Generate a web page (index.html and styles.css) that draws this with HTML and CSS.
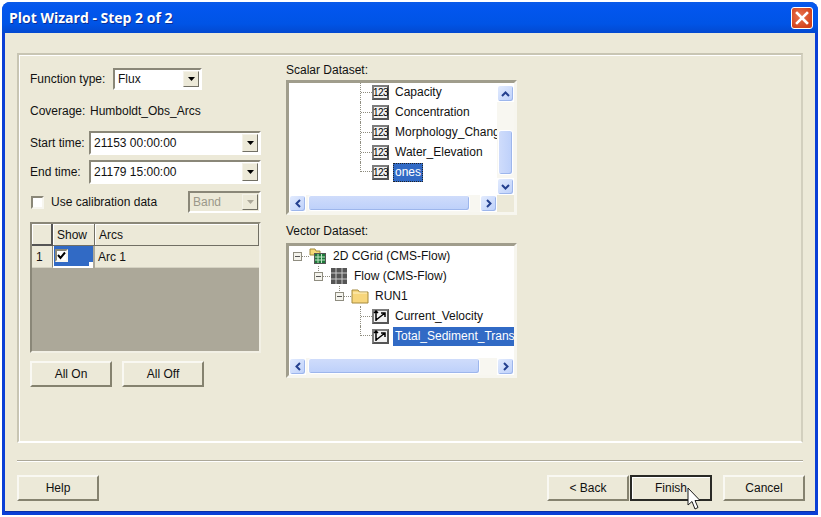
FILE: index.html
```html
<!DOCTYPE html>
<html lang="en">
<head>
  <meta charset="UTF-8">
  <title>Plot Wizard - Step 2 of 2</title>
  <link rel="stylesheet" href="styles.css">
</head>
<body>

  <div class="ventana">
    <!-- Title bar -->
    <div class="titulo">
      <span class="titulo-texto">Plot Wizard - Step 2 of 2</span>
      <span class="cerrar">
        <svg width="14" height="14" viewBox="0 0 14 14"><path d="M2 2 L12 12 M12 2 L2 12" stroke="#fff" stroke-width="2.6" stroke-linecap="square"/></svg>
      </span>
    </div>

    <div class="cliente">
      <div class="grupo">

        <!-- Left column -->
        <div class="col-izq">
          <div class="fila fila-funcion">
            <span class="lbl-funcion">Function type:</span>
            <div class="combo combo-funcion">
              <span class="combo-valor">Flux</span>
              <span class="flecha"><svg width="9" height="6" viewBox="0 0 9 6"><path d="M1 1 H8 L4.5 5 Z" fill="#000"/></svg></span>
            </div>
          </div>

          <div class="fila fila-cobertura">
            <span class="lbl-cobertura">Coverage:</span>
            <span>Humboldt_Obs_Arcs</span>
          </div>

          <div class="fila fila-inicio">
            <span class="lbl-tiempo">Start time:</span>
            <div class="combo combo-tiempo">
              <span class="combo-valor">21153 00:00:00</span>
              <span class="flecha"><svg width="9" height="6" viewBox="0 0 9 6"><path d="M1 1 H8 L4.5 5 Z" fill="#000"/></svg></span>
            </div>
          </div>

          <div class="fila fila-fin">
            <span class="lbl-tiempo">End time:</span>
            <div class="combo combo-tiempo">
              <span class="combo-valor">21179 15:00:00</span>
              <span class="flecha"><svg width="9" height="6" viewBox="0 0 9 6"><path d="M1 1 H8 L4.5 5 Z" fill="#000"/></svg></span>
            </div>
          </div>

          <div class="fila fila-calibracion">
            <span class="check"></span>
            <span class="lbl-calibracion">Use calibration data</span>
            <div class="combo combo-banda">
              <span class="combo-valor">Band</span>
              <span class="flecha"><svg width="9" height="6" viewBox="0 0 9 6"><path d="M1 1 H8 L4.5 5 Z" fill="#aca899"/></svg></span>
            </div>
          </div>

          <!-- Arcs table -->
          <div class="tabla">
            <div class="celda-cab celda-esquina"></div>
            <div class="celda-cab">Show</div>
            <div class="celda-cab">Arcs</div>
            <div class="celda-num">1</div>
            <div class="celda-show">
              <span class="check check-on">
                <svg width="9" height="9" viewBox="0 0 9 9"><path d="M1 4 L3.5 7 L8 1.5" fill="none" stroke="#000" stroke-width="2"/></svg>
              </span>
            </div>
            <div class="celda-arco">Arc 1</div>
          </div>

          <div class="fila-botones">
            <button class="boton">All On</button>
            <button class="boton">All Off</button>
          </div>
        </div>

        <!-- Right column -->
        <div class="col-der">
          <div class="lbl-arbol">Scalar Dataset:</div>
          <div class="arbol">
            <div class="arbol-medio">
              <div class="vista">
                <div class="lista lista-escalar">
                  <div class="nodo nodo-hoja"><span class="rama"></span><span class="ico-num">123</span><span class="nombre">Capacity</span></div>
                  <div class="nodo nodo-hoja"><span class="rama"></span><span class="ico-num">123</span><span class="nombre">Concentration</span></div>
                  <div class="nodo nodo-hoja"><span class="rama"></span><span class="ico-num">123</span><span class="nombre">Morphology_Change</span></div>
                  <div class="nodo nodo-hoja"><span class="rama"></span><span class="ico-num">123</span><span class="nombre">Water_Elevation</span></div>
                  <div class="nodo nodo-hoja nodo-ultimo"><span class="rama"></span><span class="ico-num">123</span><span class="nombre sel sel-foco">ones</span></div>
                </div>
              </div>
              <div class="barra-v">
                <span class="sb-btn"><svg width="9" height="6" viewBox="0 0 9 6"><path d="M1 5 L4.5 1.5 L8 5" fill="none" stroke="#24408f" stroke-width="2"/></svg></span>
                <div class="sb-pista-v">
                  <span class="sb-pulgar-v"></span>
                </div>
                <span class="sb-btn"><svg width="9" height="6" viewBox="0 0 9 6"><path d="M1 1 L4.5 4.5 L8 1" fill="none" stroke="#24408f" stroke-width="2"/></svg></span>
              </div>
            </div>
            <div class="arbol-pie">
              <div class="barra-h barra-h-corta">
                <span class="sb-btn"><svg width="6" height="9" viewBox="0 0 6 9"><path d="M5 1 L1.5 4.5 L5 8" fill="none" stroke="#24408f" stroke-width="2"/></svg></span>
                <div class="sb-pista-h"><span class="sb-pulgar-h pulgar-escalar"></span></div>
                <span class="sb-btn"><svg width="6" height="9" viewBox="0 0 6 9"><path d="M1 1 L4.5 4.5 L1 8" fill="none" stroke="#24408f" stroke-width="2"/></svg></span>
              </div>
              <span class="esquina"></span>
            </div>
          </div>

          <div class="lbl-arbol lbl-vector">Vector Dataset:</div>
          <div class="arbol">
            <div class="arbol-medio">
              <div class="vista">
                <div class="lista">
                  <div class="nodo nivel-0">
                    <span class="expansor"></span><span class="guion"></span>
                    <svg class="ico" width="18" height="18" viewBox="0 0 18 18">
                      <path d="M1 5 V2 H6 L7 4 H11 V8 H1 Z" fill="#f6d977" stroke="#a08a3c"/>
                      <rect x="5.5" y="6.5" width="11" height="10" fill="#1d7a3a" stroke="#555"/>
                      <path d="M9 7 V16 M12.5 7 V16 M6 10 H16 M6 13 H16" stroke="#bfe6c4"/>
                    </svg>
                    <span class="nombre">2D CGrid (CMS-Flow)</span>
                  </div>
                  <div class="nodo nivel-1">
                    <span class="expansor expansor-sub"></span><span class="guion"></span>
                    <svg class="ico" width="18" height="18" viewBox="0 0 18 18">
                      <rect x="1" y="1" width="16" height="16" fill="#555"/>
                      <path d="M6 1 V17 M12 1 V17 M1 6 H17 M1 12 H17" stroke="#c9c9c9"/>
                    </svg>
                    <span class="nombre">Flow (CMS-Flow)</span>
                  </div>
                  <div class="nodo nivel-2">
                    <span class="expansor expansor-sub"></span><span class="guion"></span>
                    <svg class="ico" width="18" height="18" viewBox="0 0 18 18">
                      <path d="M1 16 V3 H7 L8.5 5 H17 V16 Z" fill="#f7d67c" stroke="#a58a3e"/>
                      <path d="M2 6 H16" stroke="#fff2c4"/>
                    </svg>
                    <span class="nombre">RUN1</span>
                  </div>
                  <div class="nodo nodo-hoja">
                    <span class="rama"></span>
                    <span class="ico-vec"><svg width="15" height="13" viewBox="0 0 15 13"><path d="M3 1 V11 M1 3 L3 1 L5 3 M3 10 L12 3 M8 3 H12 V7" fill="none" stroke="#000" stroke-width="1.5"/></svg></span>
                    <span class="nombre">Current_Velocity</span>
                  </div>
                  <div class="nodo nodo-hoja nodo-ultimo">
                    <span class="rama"></span>
                    <span class="ico-vec"><svg width="15" height="13" viewBox="0 0 15 13"><path d="M3 1 V11 M1 3 L3 1 L5 3 M3 10 L12 3 M8 3 H12 V7" fill="none" stroke="#000" stroke-width="1.5"/></svg></span>
                    <span class="nombre sel">Total_Sediment_Transport</span>
                  </div>
                </div>
              </div>
            </div>
            <div class="arbol-pie">
              <div class="barra-h">
                <span class="sb-btn"><svg width="6" height="9" viewBox="0 0 6 9"><path d="M5 1 L1.5 4.5 L5 8" fill="none" stroke="#24408f" stroke-width="2"/></svg></span>
                <div class="sb-pista-h"><span class="sb-pulgar-h pulgar-vector"></span></div>
                <span class="sb-btn"><svg width="6" height="9" viewBox="0 0 6 9"><path d="M1 1 L4.5 4.5 L1 8" fill="none" stroke="#24408f" stroke-width="2"/></svg></span>
              </div>
            </div>
          </div>
        </div>

      </div>

      <div class="separador"></div>

      <!-- Bottom buttons -->
      <div class="pie">
        <button class="boton">Help</button>
        <div class="pie-der">
          <button class="boton">&lt; Back</button>
          <button class="boton boton-defecto">Finish
            <svg class="puntero" width="15" height="25" viewBox="0 0 15 25"><path d="M1 1 V18 L5 14.5 L8 22 L11 20.5 L8 13.5 H13 Z" fill="#fff" stroke="#1a1a1a"/></svg>
          </button>
          <button class="boton boton-cancelar">Cancel</button>
        </div>
      </div>
    </div>
  </div>

</body>
</html>
```

FILE: styles.css
```css
body {
  margin: 0;
  background-color: #fff;
  font-family: "Liberation Sans", Arial, sans-serif;
  font-size: 12px;
  color: #111;
}

.ventana {
  width: 816px;
  height: 513px;
  margin: 2px 0 0 2px;
  display: flex;
  flex-direction: column;
  box-sizing: border-box;
  background-color: #0a3fd6;
  border-radius: 8px 8px 0 0;
  overflow: hidden;
}

.titulo {
  height: 31px;
  flex: none;
  display: flex;
  align-items: center;
  justify-content: space-between;
  padding: 0 5px 0 7px;
  background: linear-gradient(#0a5ae8, #0356ee 15%, #0054e6 70%, #0349d0);
}

.titulo-texto {
  color: #fff;
  font-family: "Open Sans", sans-serif;
  font-weight: bold;
  font-size: 14px;
  text-shadow: 1px 1px 0 #0b2f94;
}

.cerrar {
  width: 22px;
  height: 22px;
  box-sizing: border-box;
  display: flex;
  align-items: center;
  justify-content: center;
  border: 1px solid #fff;
  border-radius: 3px;
  background: radial-gradient(circle at 40% 40%, #e9744f, #d2421c 75%);
}

.cliente {
  flex: 1;
  margin: 0 3px 3px;
  padding: 20px 12px 0;
  background-color: #ece9d8;
  border-bottom: 1px solid #0a2fa8;
}

.grupo {
  height: 390px;
  box-sizing: border-box;
  display: flex;
  gap: 25px;
  padding: 8px 0 0 11px;
  border: 2px solid #c8c5b3;
  border-right-color: #d2cfbe;
  border-bottom-color: #fff;
  box-shadow: inset 1px 1px 0 #fff;
}

.col-izq, .col-der {
  width: 231px;
}

.col-izq {
  padding-top: 5px;
}

.fila {
  display: flex;
  align-items: center;
}

.fila-funcion {
  height: 22px;
}

.lbl-funcion {
  width: 83px;
}

.fila-cobertura {
  height: 16px;
  margin-top: 13px;
}

.lbl-cobertura {
  width: 60px;
}

.fila-inicio {
  height: 24px;
  margin-top: 12px;
}

.fila-fin {
  height: 24px;
  margin-top: 5px;
}

.lbl-tiempo {
  width: 59px;
}

.fila-calibracion {
  height: 22px;
  margin-top: 7px;
}

.lbl-calibracion {
  width: 137px;
  margin-left: 7px;
  padding-left: 0;
}

.combo {
  box-sizing: border-box;
  display: flex;
  align-items: center;
  justify-content: space-between;
  background-color: #fff;
  border: 2px solid;
  border-color: #8a8778 #fff #fff #8a8778;
  padding: 1px;
}

.combo-funcion {
  width: 89px;
  height: 22px;
}

.combo-tiempo {
  width: 172px;
  height: 24px;
}

.combo-banda {
  width: 73px;
  height: 22px;
  background-color: #ece9d8;
  color: #9b988a;
}

.combo-valor {
  padding-left: 2px;
}

.flecha {
  width: 16px;
  align-self: stretch;
  display: flex;
  align-items: center;
  justify-content: center;
  box-sizing: border-box;
  background-color: #ece9d8;
  border: 1px solid;
  border-color: #f4f2e8 #716f64 #716f64 #f4f2e8;
}

.check {
  width: 13px;
  height: 13px;
  margin-left: 1px;
  box-sizing: border-box;
  display: flex;
  align-items: center;
  justify-content: center;
  background-color: #fff;
  border: 2px solid;
  border-color: #8a8778 #f7f6ef #f7f6ef #8a8778;
}

.tabla {
  height: 131px;
  margin-top: 9px;
  box-sizing: border-box;
  display: grid;
  grid-template-columns: 21px 42px 1fr;
  grid-template-rows: 22px 22px;
  background-color: #aca899;
  border: 2px solid;
  border-color: #8a8778 #f2f0e5 #f2f0e5 #8a8778;
}

.celda-cab {
  display: flex;
  align-items: center;
  padding-left: 4px;
  background-color: #ece9d8;
  border-right: 1px solid #716f64;
  border-bottom: 1px solid #716f64;
  box-shadow: inset 1px 1px 0 #fff;
}

.celda-esquina {
  border-right-width: 2px;
  border-bottom-width: 2px;
  border-color: #555;
  padding: 0;
}

.celda-num {
  display: flex;
  align-items: center;
  padding-left: 4px;
  background-color: #ece9d8;
  border-right: 1px solid #8a8778;
  border-bottom: 1px solid #d5d2c2;
}

.celda-show {
  position: relative;
  display: flex;
  align-items: flex-start;
  padding: 3px 0 0 1px;
  margin-right: 2px;
  background-color: #316ac5;
  border-left: 1px solid #fff;
  border-bottom: 2px solid #fff;
}

.celda-show::after {
  content: "";
  position: absolute;
  right: 0;
  bottom: 0;
  width: 4px;
  height: 4px;
  background-color: #fff;
}

.check-on {
  margin: 0;
}

.celda-arco {
  display: flex;
  align-items: center;
  padding-left: 3px;
  background-color: #ece9d8;
  border-bottom: 1px solid #d5d2c2;
}

.fila-botones {
  display: flex;
  gap: 10px;
  margin-top: 8px;
}

.boton {
  width: 82px;
  height: 26px;
  padding: 0;
  position: relative;
  font-family: "Liberation Sans", Arial, sans-serif;
  font-size: 12px;
  color: #111;
  background-color: #ece9d8;
  border: 2px solid;
  border-color: #f9f8f2 #85826f #85826f #f9f8f2;
}

.boton-defecto {
  margin-left: 1px;
  border-color: #2a2a26;
  box-shadow: inset 1px 1px 0 #fff;
}

.boton-cancelar {
  margin-left: 11px;
}

.puntero {
  position: absolute;
  left: 55px;
  top: 10px;
}

.lbl-arbol {
  height: 17px;
  line-height: 15px;
}

.lbl-vector {
  margin-top: 9px;
  height: 19px;
}

.arbol {
  width: 231px;
  height: 135px;
  box-sizing: border-box;
  display: flex;
  flex-direction: column;
  background-color: #fff;
  border: 3px solid;
  border-color: #a09d8c #f7f6ef #f7f6ef #a09d8c;
}

.arbol-medio {
  height: 112px;
  display: flex;
}

.vista {
  flex: 1;
  min-width: 0;
  overflow: hidden;
}

.lista-escalar {
  margin-top: -1px;
}

.nodo {
  height: 20px;
  display: flex;
  align-items: center;
  white-space: nowrap;
}

.nodo-hoja {
  padding-left: 71px;
}

.nivel-0 {
  padding-left: 4px;
}

.nivel-1 {
  padding-left: 25px;
}

.nivel-2 {
  padding-left: 46px;
}

.rama {
  width: 11px;
  height: 20px;
  flex: none;
  display: flex;
  align-items: center;
  border-left: 1px dotted #8f8d80;
}

.rama::after {
  content: "";
  flex: 1;
  border-top: 1px dotted #8f8d80;
}

.nodo-ultimo .rama {
  height: 10px;
  align-self: flex-start;
  align-items: flex-end;
}

.expansor {
  width: 9px;
  height: 9px;
  flex: none;
  position: relative;
  box-sizing: border-box;
  background: linear-gradient(#555, #555) center / 5px 1px no-repeat #f4f3ec;
  border: 1px solid #8f8d80;
}

.expansor-sub::before {
  content: "";
  position: absolute;
  left: 3px;
  top: -7px;
  height: 5px;
  border-left: 1px dotted #8f8d80;
}

.guion {
  width: 7px;
  flex: none;
  border-top: 1px dotted #8f8d80;
}

.ico {
  flex: none;
}

.ico-num, .ico-vec {
  width: 17px;
  height: 15px;
  flex: none;
  box-sizing: border-box;
  display: flex;
  align-items: center;
  justify-content: center;
  background-color: #f1f1f1;
  border: 2px solid #7d7d7d;
  border-right-color: #555;
  border-bottom-color: #555;
}

.ico-num {
  font-size: 10px;
  letter-spacing: -0.5px;
  color: #000;
}

.ico-vec svg {
  flex: none;
}

.nombre {
  margin-left: 4px;
  padding: 2px 2px;
  line-height: 15px;
}

.ico + .nombre {
  margin-left: 4px;
}

.sel {
  background-color: #316ac5;
  color: #fff;
}

.sel-foco {
  outline: 1px dotted #222;
  outline-offset: -1px;
}

.barra-v {
  width: 17px;
  flex: none;
  box-sizing: border-box;
  padding-top: 2px;
  display: flex;
  flex-direction: column;
}

.sb-btn {
  width: 17px;
  height: 17px;
  flex: none;
  box-sizing: border-box;
  display: flex;
  align-items: center;
  justify-content: center;
  background: linear-gradient(135deg, #e2ebfe, #bdd0fa);
  border: 1px solid #fff;
  border-radius: 3px;
  box-shadow: inset -1px -1px 0 #9db6ec;
}

.sb-pista-v {
  flex: 1;
  padding-top: 28px;
  background-color: #f8f7f1;
}

.sb-pulgar-v {
  display: block;
  height: 45px;
  margin: 0 1px;
  border-radius: 3px;
  background: linear-gradient(90deg, #cfdcfb, #bdd0fa);
  border: 1px solid #fff;
  box-shadow: inset -1px -1px 0 #9db6ec;
  box-sizing: border-box;
}

.arbol-pie {
  height: 17px;
  display: flex;
  flex: none;
}

.barra-h {
  flex: 1;
  display: flex;
}

.barra-h-corta {
  flex: none;
  width: 208px;
}

.esquina {
  flex: 1;
  background-color: #ece9d8;
}

.sb-pista-h {
  flex: 1;
  padding-left: 2px;
  background-color: #f8f7f1;
}

.sb-pulgar-h {
  display: block;
  height: 16px;
  box-sizing: border-box;
  border-radius: 3px;
  background: linear-gradient(#cfdcfb, #bdd0fa);
  border: 1px solid #fff;
  box-shadow: inset -1px -1px 0 #9db6ec;
}

.pulgar-escalar {
  width: 162px;
}

.pulgar-vector {
  width: 172px;
}

.separador {
  height: 1px;
  margin-top: 17px;
  background-color: #aca899;
  box-shadow: 0 1px 0 #fff;
}

.pie {
  display: flex;
  justify-content: space-between;
  margin-top: 14px;
}

.pie-der {
  display: flex;
  margin-right: -2px;
}
```
